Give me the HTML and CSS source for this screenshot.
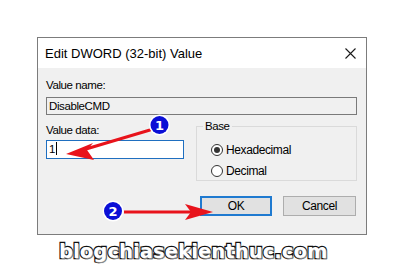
FILE: index.html
```html
<!DOCTYPE html>
<html lang="en">
<head>
  <meta charset="UTF-8" />
  <title>Edit DWORD (32-bit) Value</title>
  <link rel="stylesheet" href="styles.css">
</head>
<body>

  <div class="pagina">
    <div class="dialogo">
      <div class="barra-titulo">
        <span class="titulo">Edit DWORD (32-bit) Value</span>
        <svg class="fechar" width="11" height="11" viewBox="0 0 11 11">
          <path d="M0.5 0.5 L10.5 10.5 M10.5 0.5 L0.5 10.5" stroke="#1a1a1a" stroke-width="1.1" fill="none" />
        </svg>
      </div>

      <div class="conteudo">
        <div class="rotulo">Value name:</div>
        <div class="campo campo-nome">DisableCMD</div>

        <div class="linha-dados">
          <div class="coluna-dados">
            <div class="rotulo">Value data:</div>
            <div class="campo campo-dados">1<span class="cursor"></span></div>
          </div>

          <fieldset class="grupo-base">
            <legend>Base</legend>
            <div class="opcao"><span class="radio marcado"></span>Hexadecimal</div>
            <div class="opcao"><span class="radio"></span>Decimal</div>
          </fieldset>
        </div>

        <div class="botoes">
          <button class="botao botao-ok">OK</button>
          <button class="botao">Cancel</button>
        </div>
      </div>
    </div>

    <div class="marca">blogchiasekienthuc.com</div>

    <svg class="anotacoes" width="413" height="277" viewBox="0 0 413 277">
      <!-- seta 1 -->
      <path d="M150 130 L86 149" stroke="#e8131b" stroke-width="3" fill="none" stroke-linecap="round" />
      <path d="M66 154 L93 143 L87 150 L94 160 Z" fill="#e8131b" />
      <!-- seta 2 -->
      <path d="M124 212 L192 212" stroke="#e8131b" stroke-width="3" fill="none" />
      <path d="M213 212 L185 204 L191 212 L185 220 Z" fill="#e8131b" />

      <circle cx="159.5" cy="125" r="10.5" fill="#ffffff" />
      <circle cx="159.5" cy="125" r="9" fill="#0b0fd6" />
      <text x="159.5" y="129.5" text-anchor="middle" class="numero">1</text>

      <circle cx="113" cy="211" r="10.5" fill="#ffffff" />
      <circle cx="113" cy="211" r="9" fill="#0b0fd6" />
      <text x="113" y="215.5" text-anchor="middle" class="numero">2</text>
    </svg>
  </div>

</body>
</html>
```

FILE: styles.css
```css
body {
  margin: 0;
  background: #ffffff;
  font-family: 'Liberation Sans', Arial, sans-serif;
  color: #000000;
}

.pagina {
  position: relative;
  width: 413px;
  height: 277px;
  padding: 37px 0 0 37px;
  box-sizing: border-box;
}

.dialogo {
  width: 330px;
  height: 198px;
  box-sizing: border-box;
  border: 1px solid #7c7c7c;
  background: #f0f0f0;
}

.barra-titulo {
  height: 30px;
  background: #ffffff;
  display: flex;
  align-items: center;
  justify-content: space-between;
  padding: 0 10px 0 7px;
}

.titulo {
  font-size: 13px;
  margin-top: 1px;
}

.conteudo {
  padding: 10px 9px 0 8px;
  font-size: 11.5px;
  letter-spacing: -0.4px;
}

.rotulo {
  height: 14px;
  line-height: 14px;
}

.campo {
  box-sizing: border-box;
  border: 1px solid #7a7a7a;
  height: 18px;
  line-height: 16px;
  padding-left: 2px;
  background: #f0f0f0;
}

.campo-nome {
  margin-top: 5px;
  width: 311px;
}

.linha-dados {
  display: flex;
  margin-top: 4px;
}

.coluna-dados {
  width: 138px;
  padding-top: 4px;
}

.campo-dados {
  margin-top: 3px;
  height: 19px;
  line-height: 17px;
  border-color: #1f6fc0;
  background: #ffffff;
}

.cursor {
  display: inline-block;
  width: 1px;
  height: 13px;
  background: #000000;
  vertical-align: -2px;
  margin-left: 1px;
}

.grupo-base {
  margin: 0 0 0 12px;
  width: 161px;
  height: 62px;
  box-sizing: border-box;
  border: 1px solid #dadada;
  padding: 6px 0 0 14px;
}

.grupo-base legend {
  padding: 0 2px;
  margin-left: -8px;
  line-height: 14px;
}

.opcao {
  display: flex;
  align-items: center;
  height: 21px;
  font-size: 12px;
}

.radio {
  width: 12px;
  height: 12px;
  box-sizing: border-box;
  border: 1px solid #333333;
  border-radius: 50%;
  background: #ffffff;
  margin-right: 3px;
  position: relative;
}

.radio.marcado::after {
  content: "";
  position: absolute;
  left: 2px;
  top: 2px;
  width: 6px;
  height: 6px;
  border-radius: 50%;
  background: #333333;
}

.botoes {
  display: flex;
  justify-content: flex-end;
  gap: 11px;
  margin-top: 15px;
  padding-right: 1px;
}

.botao {
  width: 73px;
  height: 20px;
  box-sizing: border-box;
  border: 1px solid #adadad;
  background: #e1e1e1;
  font-family: 'Liberation Sans', Arial, sans-serif;
  font-size: 12px;
  letter-spacing: -0.4px;
  color: #000000;
  padding: 0;
}

.botao-ok {
  width: 72px;
  border: 2px solid #1f7ad0;
}

.marca {
  margin: 5px 0 0 22px;
  font-family: 'DejaVu Sans', sans-serif;
  font-weight: bold;
  font-size: 19.5px;
  letter-spacing: 0.1px;
  color: #ffffff;
  -webkit-text-stroke: 2.4px #111111;
  paint-order: stroke fill;
  text-shadow: 1px 1px 1px #9a9a9a;
}

.anotacoes {
  position: absolute;
  left: 0;
  top: 0;
}

.numero {
  font-family: 'DejaVu Sans', sans-serif;
  font-weight: bold;
  font-size: 13px;
  fill: #ffffff;
}
```
